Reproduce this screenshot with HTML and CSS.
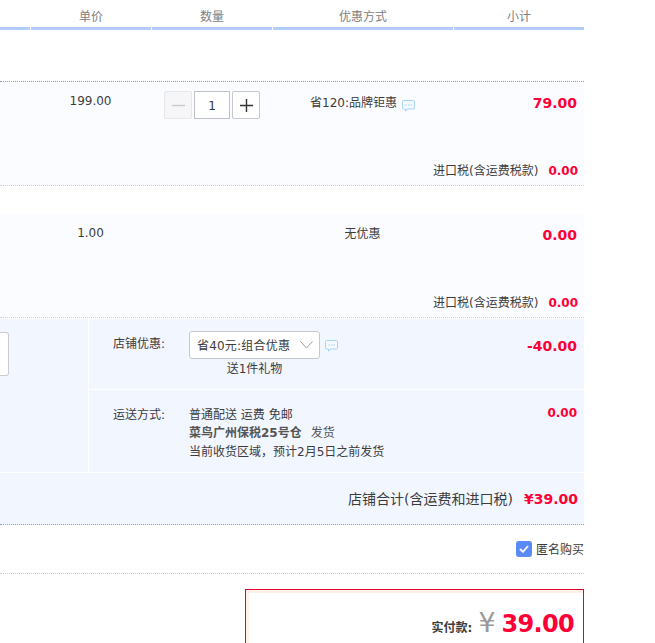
FILE: index.html
```html
<!DOCTYPE html>
<html lang="zh-CN">
<head>
<meta charset="utf-8">
<title>确认订单</title>
<link rel="stylesheet" href="styles.css">
</head>
<body>
<main class="order">
  <div class="head">
    <div class="hcell hc0"></div>
    <div class="hcell hc1">单价</div>
    <div class="hcell hc2">数量</div>
    <div class="hcell hc3">优惠方式</div>
    <div class="hcell hc4">小计</div>
  </div>

  <div class="gap gap-a"></div>

  <section class="item item-a">
    <div class="cols">
      <div class="c0"></div>
      <div class="c1">199.00</div>
      <div class="c2">
        <div class="stepper">
          <span class="btn btn-off"><svg width="13" height="13" viewBox="0 0 13 13"><path d="M0 6.500h13" stroke="#c8c9cc" stroke-width="1.400"/></svg></span>
          <span class="qty">1</span>
          <span class="btn"><svg width="13" height="13" viewBox="0 0 13 13"><path d="M0 6.500h13M6.500 0v13" stroke="#333" stroke-width="1.400"/></svg></span>
        </div>
      </div>
      <div class="c3 promo promo-a">省120:品牌钜惠<svg class="chat" width="13" height="12" viewBox="0 0 13 12"><path d="M1.500.5h10a1 1 0 0 1 1 1v6.500a1 1 0 0 1-1 1H6l-2.500 2V9h-2a1 1 0 0 1-1-1V1.500a1 1 0 0 1 1-1z" fill="#f4f9ff" stroke="#a6d4f5"/><path d="M3.500 5h1.500M6 5h1.500M8.500 5H10" stroke="#a6d4f5"/></svg></div>
      <div class="c4 sub">79.00</div>
    </div>
    <div class="tax">进口税(含运费税款)<b>0.00</b></div>
  </section>

  <div class="gap gap-b"></div>

  <section class="item item-b">
    <div class="cols">
      <div class="c0"></div>
      <div class="c1">1.00</div>
      <div class="c2"></div>
      <div class="c3 promo none">无优惠</div>
      <div class="c4 sub">0.00</div>
    </div>
    <div class="tax">进口税(含运费税款)<b>0.00</b></div>
  </section>

  <section class="shop">
    <div class="memo"><div class="memo-box"></div></div>
    <div class="shop-right">
      <div class="srow srow-a">
        <div class="slabel">店铺优惠:</div>
        <div class="sbody">
          <div class="pick-line">
            <div class="pick"><span class="pick-text">省40元:组合优惠</span><svg width="13" height="8" viewBox="0 0 13 8"><path d="M.5.5l6 6.500 6-6.500" fill="none" stroke="#999"/></svg></div>
            <svg class="chat chat-b" width="13" height="12" viewBox="0 0 13 12"><path d="M1.500.5h10a1 1 0 0 1 1 1v6.500a1 1 0 0 1-1 1H6l-2.500 2V9h-2a1 1 0 0 1-1-1V1.500a1 1 0 0 1 1-1z" fill="#f4f9ff" stroke="#a6d4f5"/><path d="M3.500 5h1.500M6 5h1.500M8.500 5H10" stroke="#a6d4f5"/></svg>
          </div>
          <div class="gift">送1件礼物</div>
        </div>
        <div class="samt samt-a">-40.00</div>
      </div>
      <div class="srow srow-b">
        <div class="slabel">运送方式:</div>
        <div class="sbody ship">
          <div>普通配送 运费 免邮</div>
          <div><b>菜鸟广州保税25号仓</b><span class="send">发货</span></div>
          <div>当前收货区域，预计2月5日之前发货</div>
        </div>
        <div class="samt samt-b">0.00</div>
      </div>
    </div>
  </section>

  <div class="total">店铺合计(含运费和进口税)<b>¥39.00</b></div>

  <div class="anon">
    <span class="check"><svg width="10" height="8" viewBox="0 0 10 8"><path d="M1 4l3 2.800L9 1" fill="none" stroke="#fff" stroke-width="1.800"/></svg></span>匿名购买
  </div>

  <section class="pay">
    <div class="pay-inner">
      <span class="pay-label">实付款:</span><span class="yen">¥</span><span class="pay-num">39.00</span>
    </div>
  </section>
</main>
</body>
</html>
```

FILE: styles.css
```css
* { box-sizing: border-box; }
html, body { margin: 0; padding: 0; background: #fff; overflow: hidden; height: 643px; }
body { font-family: "DejaVu Sans", "Noto Sans CJK SC", sans-serif; font-size: 12px; color: #3c3c3c; }
.order { width: 584px; overflow: hidden; }

.head { display: flex; gap: 1px; height: 30px; }
.hcell { border-bottom: 3px solid #b2cdf7; color: #808080; text-align: center; line-height: 34px; height: 30px; }
.hc0 { width: 30px; }
.hc1, .hc2 { width: 120px; }
.hc3 { width: 180px; }
.hc4 { width: 130px; }

.gap { background: #fff; }
.gap-a { height: 52px; border-bottom: 1px dotted #80a0d0; }
.gap-b { height: 28px; }

.item { background: #fbfcff; height: 104px; position: relative; border-bottom: 1px dotted #d0d0d0; }
.cols { display: flex; padding-top: 11px; line-height: 17px; }
.c0 { width: 30px; flex: none; }
.c1 { width: 121px; flex: none; text-align: center; }
.c2 { width: 121px; flex: none; display: flex; justify-content: center; margin-top: -2px; }
.c3 { width: 181px; flex: none; text-align: center; }
.c4 { flex: 1; text-align: right; padding-right: 7px; }
.promo { padding-top: 1px; }
.promo-a { padding-top: 2px; }
.sub { font-weight: bold; font-size: 14px; color: #ff0036; padding-top: 2px; }
.none { color: #3c3c3c; }
.chat { display: inline-block; vertical-align: -5px; margin-left: 5px; }
.chat-b { margin-top: 2px; }

.stepper { display: flex; gap: 2px; margin-left: 1px; }
.btn { width: 28px; height: 28px; border: 1px solid #c6c8cf; border-radius: 2px; background: #fff; display: flex; align-items: center; justify-content: center; }
.btn-off { background: #f6f6f8; border-color: #e6e6e9; }
.qty { width: 36px; height: 28px; border: 1px solid #bfc2c9; background: #fff; text-align: center; line-height: 28px; color: #333; }

.tax { position: absolute; right: 6px; bottom: 5px; line-height: 17px; }
.tax b { color: #ff0036; margin-left: 10px; }

.shop { display: flex; margin-top: 1px; height: 153px; background: #f2f6ff; }
.memo { width: 89px; flex: none; border-right: 1px solid #fff; padding-top: 13px; }
.memo-box { width: 9px; height: 44px; background: #fff; border: 1px solid #ccc; border-left: 0; border-radius: 0 3px 3px 0; }
.shop-right { flex: 1; display: flex; flex-direction: column; }
.srow { display: flex; position: relative; padding-left: 24px; }
.srow-a { height: 71px; border-bottom: 1px solid #fff; padding-top: 12px; }
.srow-b { height: 82px; padding-top: 16px; }
.slabel { width: 76px; flex: none; line-height: 18px; }
.srow-a .slabel { padding-top: 4px; }
.pick-line { display: flex; align-items: center; }
.pick { width: 131px; height: 28px; border: 1px solid #c6c8cf; border-radius: 3px; background: #fff; display: flex; align-items: center; justify-content: space-between; padding: 0 6px 2px 7px; white-space: nowrap; }
.pick-text { letter-spacing: 0.2px; }
.pick svg { margin-top: 2px; }
.gift { width: 131px; text-align: center; line-height: 18px; margin-top: 1px; }
.ship { line-height: 18px; }
.ship div:last-child { margin-top: 1px; }
.ship b { font-weight: bold; color: #555; }
.send { margin-left: 9px; color: #555; }
.samt { position: absolute; right: 7px; line-height: 17px; font-weight: bold; color: #ff0036; }
.samt-a { top: 19px; font-size: 14px; }
.samt-b { top: 15px; font-size: 12px; }

.total { margin-top: 1px; height: 52px; background: #f2f6ff; border-bottom: 1px dotted #80a0e8; text-align: right; line-height: 52px; font-size: 14px; padding-right: 6px; }
.total b { color: #ff0036; margin-left: 11px; }

.anon { height: 49px; padding-bottom: 1px; border-bottom: 1px dotted #cfcfcf; display: flex; align-items: center; justify-content: flex-end; }
.check { width: 16px; height: 16px; flex: none; border-radius: 3px; background: #5a8af8; display: flex; align-items: center; justify-content: center; margin-right: 4px; }

.pay { margin: 15px 0 0 245px; height: 60px; border: 1px solid #e5002d; border-bottom: 0; background: #fff; overflow: hidden; }
.pay-inner { border-style: solid; border-color: #fff0e8; border-width: 3px 0 0 3px; height: 100%; display: flex; align-items: baseline; justify-content: flex-end; padding: 12px 9px 0 0; white-space: nowrap; line-height: 36px; }
.pay-label { font-weight: bold; }
.yen { font-size: 27px; color: #999; margin: 0 6px 0 6px; }
.pay-num { font-weight: bold; font-size: 24px; letter-spacing: -0.7px; color: #ff0036; }
```
